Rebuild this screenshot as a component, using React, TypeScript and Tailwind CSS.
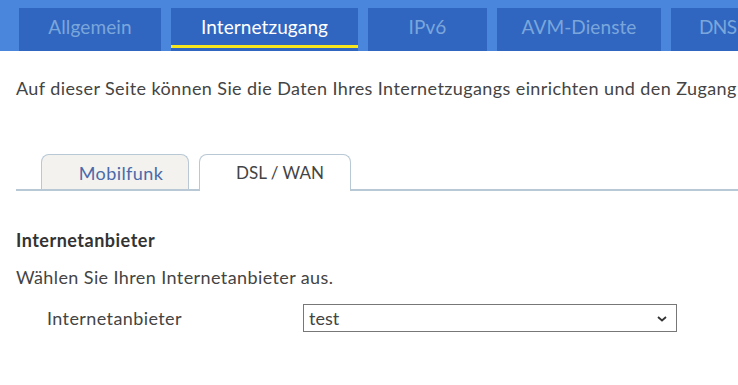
import React from "react";

const mainTabs = [
  { label: "Allgemein", w: "w-[142px] tracking-[0.1px]" },
  { label: "Internetzugang", w: "w-[187px] tracking-[0.1px]", active: true },
  { label: "IPv6", w: "w-[119px] tracking-[0.1px]" },
  { label: "AVM-Dienste", w: "w-[164px] tracking-[0.1px]" },
  { label: "DNS", w: "w-[100px] justify-start pl-[28px] tracking-[-0.6px]" },
];

export default function App() {
  return (
    <div className="w-[738px] h-[385px] overflow-hidden bg-white font-['Lato',sans-serif] text-[#444]">
      <div className="flex gap-[10px] bg-[#4a86db] pt-2 pl-[19px] h-[51px] overflow-hidden">
        {mainTabs.map((t) => (
          <div
            key={t.label}
            className={`relative shrink-0 ${t.w} h-[43px] bg-[#3066bf] flex items-center justify-center pb-[5px] text-[19px] ${
              t.active ? "text-white" : "text-[#7ba6dc]"
            }`}
          >
            {t.label}
            {t.active && <div className="absolute left-0 right-0 bottom-[3px] h-[3px] bg-[#f5e61e]" />}
          </div>
        ))}
      </div>

      <p className="pl-4 mt-6 text-[18px] leading-[27px] tracking-[0.4px] whitespace-nowrap text-[#444]">
        Auf dieser Seite können Sie die Daten Ihres Internetzugangs einrichten und den Zugang
      </p>

      <div className="ml-4 mt-[52px] flex items-end border-b-2 border-[#b8c8d4] h-[37px]">
        <div className="ml-[25px] w-[148px] h-[35px] bg-[#f3f2ef] border border-b-0 border-[#b8c8d4] rounded-t-[8px] flex items-center justify-center pl-[12px] pt-[2px] text-[18px] tracking-[0.4px] text-[#4a6aaa]">
          Mobilfunk
        </div>
        <div className="ml-[10px] -mb-[2px] w-[152px] h-[37px] bg-white border border-b-0 border-[#b8c8d4] rounded-t-[8px] flex items-center justify-center pl-[10px] text-[17px] text-[#444]">
          DSL / WAN
        </div>
      </div>

      <div className="pl-4 pt-[36px]">
        <h3 className="font-bold text-[18px] leading-[27px] tracking-[0.5px] text-[#333]">Internetanbieter</h3>
        <p className="mt-[10px] text-[18px] leading-[27px] tracking-[0.4px]">Wählen Sie Ihren Internetanbieter aus.</p>
        <div className="mt-[13px] flex items-center">
          <label className="pl-[31px] w-[287px] text-[18px] tracking-[0.4px]">Internetanbieter</label>
          <div className="relative w-[374px] h-[28px] border border-[#777] flex items-center pl-[5px] text-[18px] text-[#444]">
            test
            <svg className="absolute right-[9px] top-[11px]" width="10" height="6" viewBox="0 0 10 6">
              <path d="M1 1l4 3.5 4-3.5" fill="none" stroke="#333" strokeWidth="1.8" />
            </svg>
          </div>
        </div>
      </div>
    </div>
  );
}
